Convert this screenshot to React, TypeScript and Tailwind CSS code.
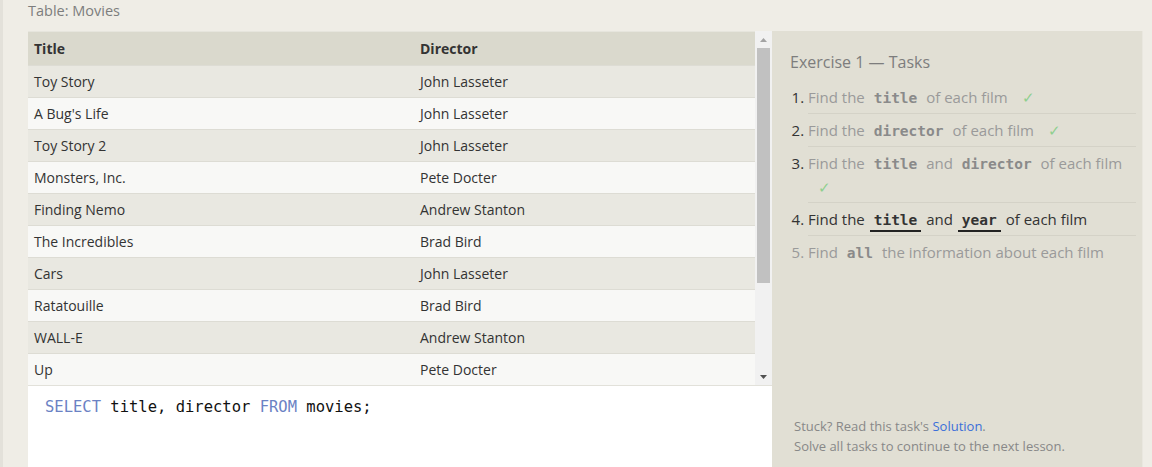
import React from "react";

const rows: [string, string][] = [
  ["Toy Story", "John Lasseter"],
  ["A Bug's Life", "John Lasseter"],
  ["Toy Story 2", "John Lasseter"],
  ["Monsters, Inc.", "Pete Docter"],
  ["Finding Nemo", "Andrew Stanton"],
  ["The Incredibles", "Brad Bird"],
  ["Cars", "John Lasseter"],
  ["Ratatouille", "Brad Bird"],
  ["WALL-E", "Andrew Stanton"],
  ["Up", "Pete Docter"],
];

const sans = { fontFamily: '"Open Sans", "Noto Sans", sans-serif' };
const mono = { fontFamily: '"DejaVu Sans Mono", "Liberation Mono", monospace' };

function Code({ children, active }: { children: React.ReactNode; active?: boolean }) {
  return (
    <code
      style={mono}
      className={
        "mx-[1px] px-1 font-bold text-[14.5px] leading-none " +
        (active ? "text-[#333] border-b-2 border-[#222] pb-[2px]" : "text-[#8a8a8a]")
      }
    >
      {children}
    </code>
  );
}

function Check() {
  return <span className="ml-[10px] text-[#8fcf8f] text-[15px] leading-none">✓</span>;
}

export default function App() {
  return (
    <div
      style={sans}
      className="w-[1152px] h-[467px] overflow-hidden bg-[#efede6] border-l-[3px] border-[#e3e1da] flex flex-col"
    >
      <div className="h-[31px] pl-[25px] text-[14.5px] leading-[22px] text-[#7d7d7d]">Table: Movies</div>
      <div className="flex flex-1 min-h-0 pl-[25px] pr-[9px]">
        <div className="w-[744px] flex flex-col">
          <div className="flex h-[354px]">
            <div className="flex-1 text-[14px] text-[#333]">
              <div className="flex h-[34px] items-center bg-[#dad9cd] border-t border-[#e6e5dd] font-bold">
                <div className="w-[386px] pl-[6px]">Title</div>
                <div className="flex-1 pl-[6px]">Director</div>
              </div>
              {rows.map(([t, d], i) => (
                <div
                  key={t}
                  className={
                    "flex h-[32px] items-center border-t border-[#dddcd4] " +
                    (i % 2 === 0 ? "bg-[#e9e8e1]" : "bg-[#f8f8f6]")
                  }
                >
                  <div className="w-[386px] pl-[6px]">{t}</div>
                  <div className="flex-1 pl-[6px]">{d}</div>
                </div>
              ))}
            </div>
            <div className="w-[17px] bg-[#f1f1f1] flex flex-col items-center">
              <div className="h-[17px] flex items-center justify-center">
                <svg width="7" height="4" viewBox="0 0 7 4">
                  <polygon points="3.5,0 7,4 0,4" fill="#a3a3a3" />
                </svg>
              </div>
              <div className="w-[13px] h-[235px] bg-[#c1c1c1]" />
              <div className="flex-1" />
              <div className="h-[17px] flex items-center justify-center">
                <svg width="7" height="4" viewBox="0 0 7 4">
                  <polygon points="0,0 7,0 3.5,4" fill="#505050" />
                </svg>
              </div>
            </div>
          </div>
          <div className="flex-1 bg-white border-t border-[#e2e1da] pl-[17px] pt-[10px]">
            <div style={mono} className="text-[15.5px] leading-[22px] text-[#111]">
              <span className="text-[#6b82c4]">SELECT</span> title, director{" "}
              <span className="text-[#6b82c4]">FROM</span> movies;
            </div>
          </div>
        </div>
        <div className="w-[371px] bg-[#e1dfd4] border-r border-[#e9e7df] flex flex-col pl-[18px] pr-[6px] pt-[19px] pb-[11px]">
          <div className="text-[16px] leading-[24px] text-[#7d7d7d]">Exercise 1 — Tasks</div>
          <ol className="mt-[7px] ml-[18px] text-[15px] leading-[24px] list-decimal list-outside">
            <li className="py-1 border-b border-[#d4d2c7] text-[#9a9a9a] marker:text-[#333]">
              Find the <Code>title</Code> of each film <Check />
            </li>
            <li className="py-1 border-b border-[#d4d2c7] text-[#9a9a9a] marker:text-[#333]">
              Find the <Code>director</Code> of each film <Check />
            </li>
            <li className="pt-1 pb-[3px] border-b border-[#d4d2c7] text-[#9a9a9a] marker:text-[#333]">
              Find the <Code>title</Code> and <Code>director</Code> of each film <Check />
            </li>
            <li className="py-1 border-b border-[#d4d2c7] text-[#333] marker:text-[#333]">
              Find the <Code active>title</Code> and <Code active>year</Code> of each film
            </li>
            <li className="py-1 text-[#9a9a9a] marker:text-[#9a9a9a]">
              Find <Code>all</Code> the information about each film
            </li>
          </ol>
          <div className="flex-1" />
          <div className="pl-[4px] text-[13px] leading-[20px] text-[#888]">
            <div>
              Stuck? Read this task's <span className="text-[#3b6fd9]">Solution</span>.
            </div>
            <div>Solve all tasks to continue to the next lesson.</div>
          </div>
        </div>
      </div>
    </div>
  );
}
